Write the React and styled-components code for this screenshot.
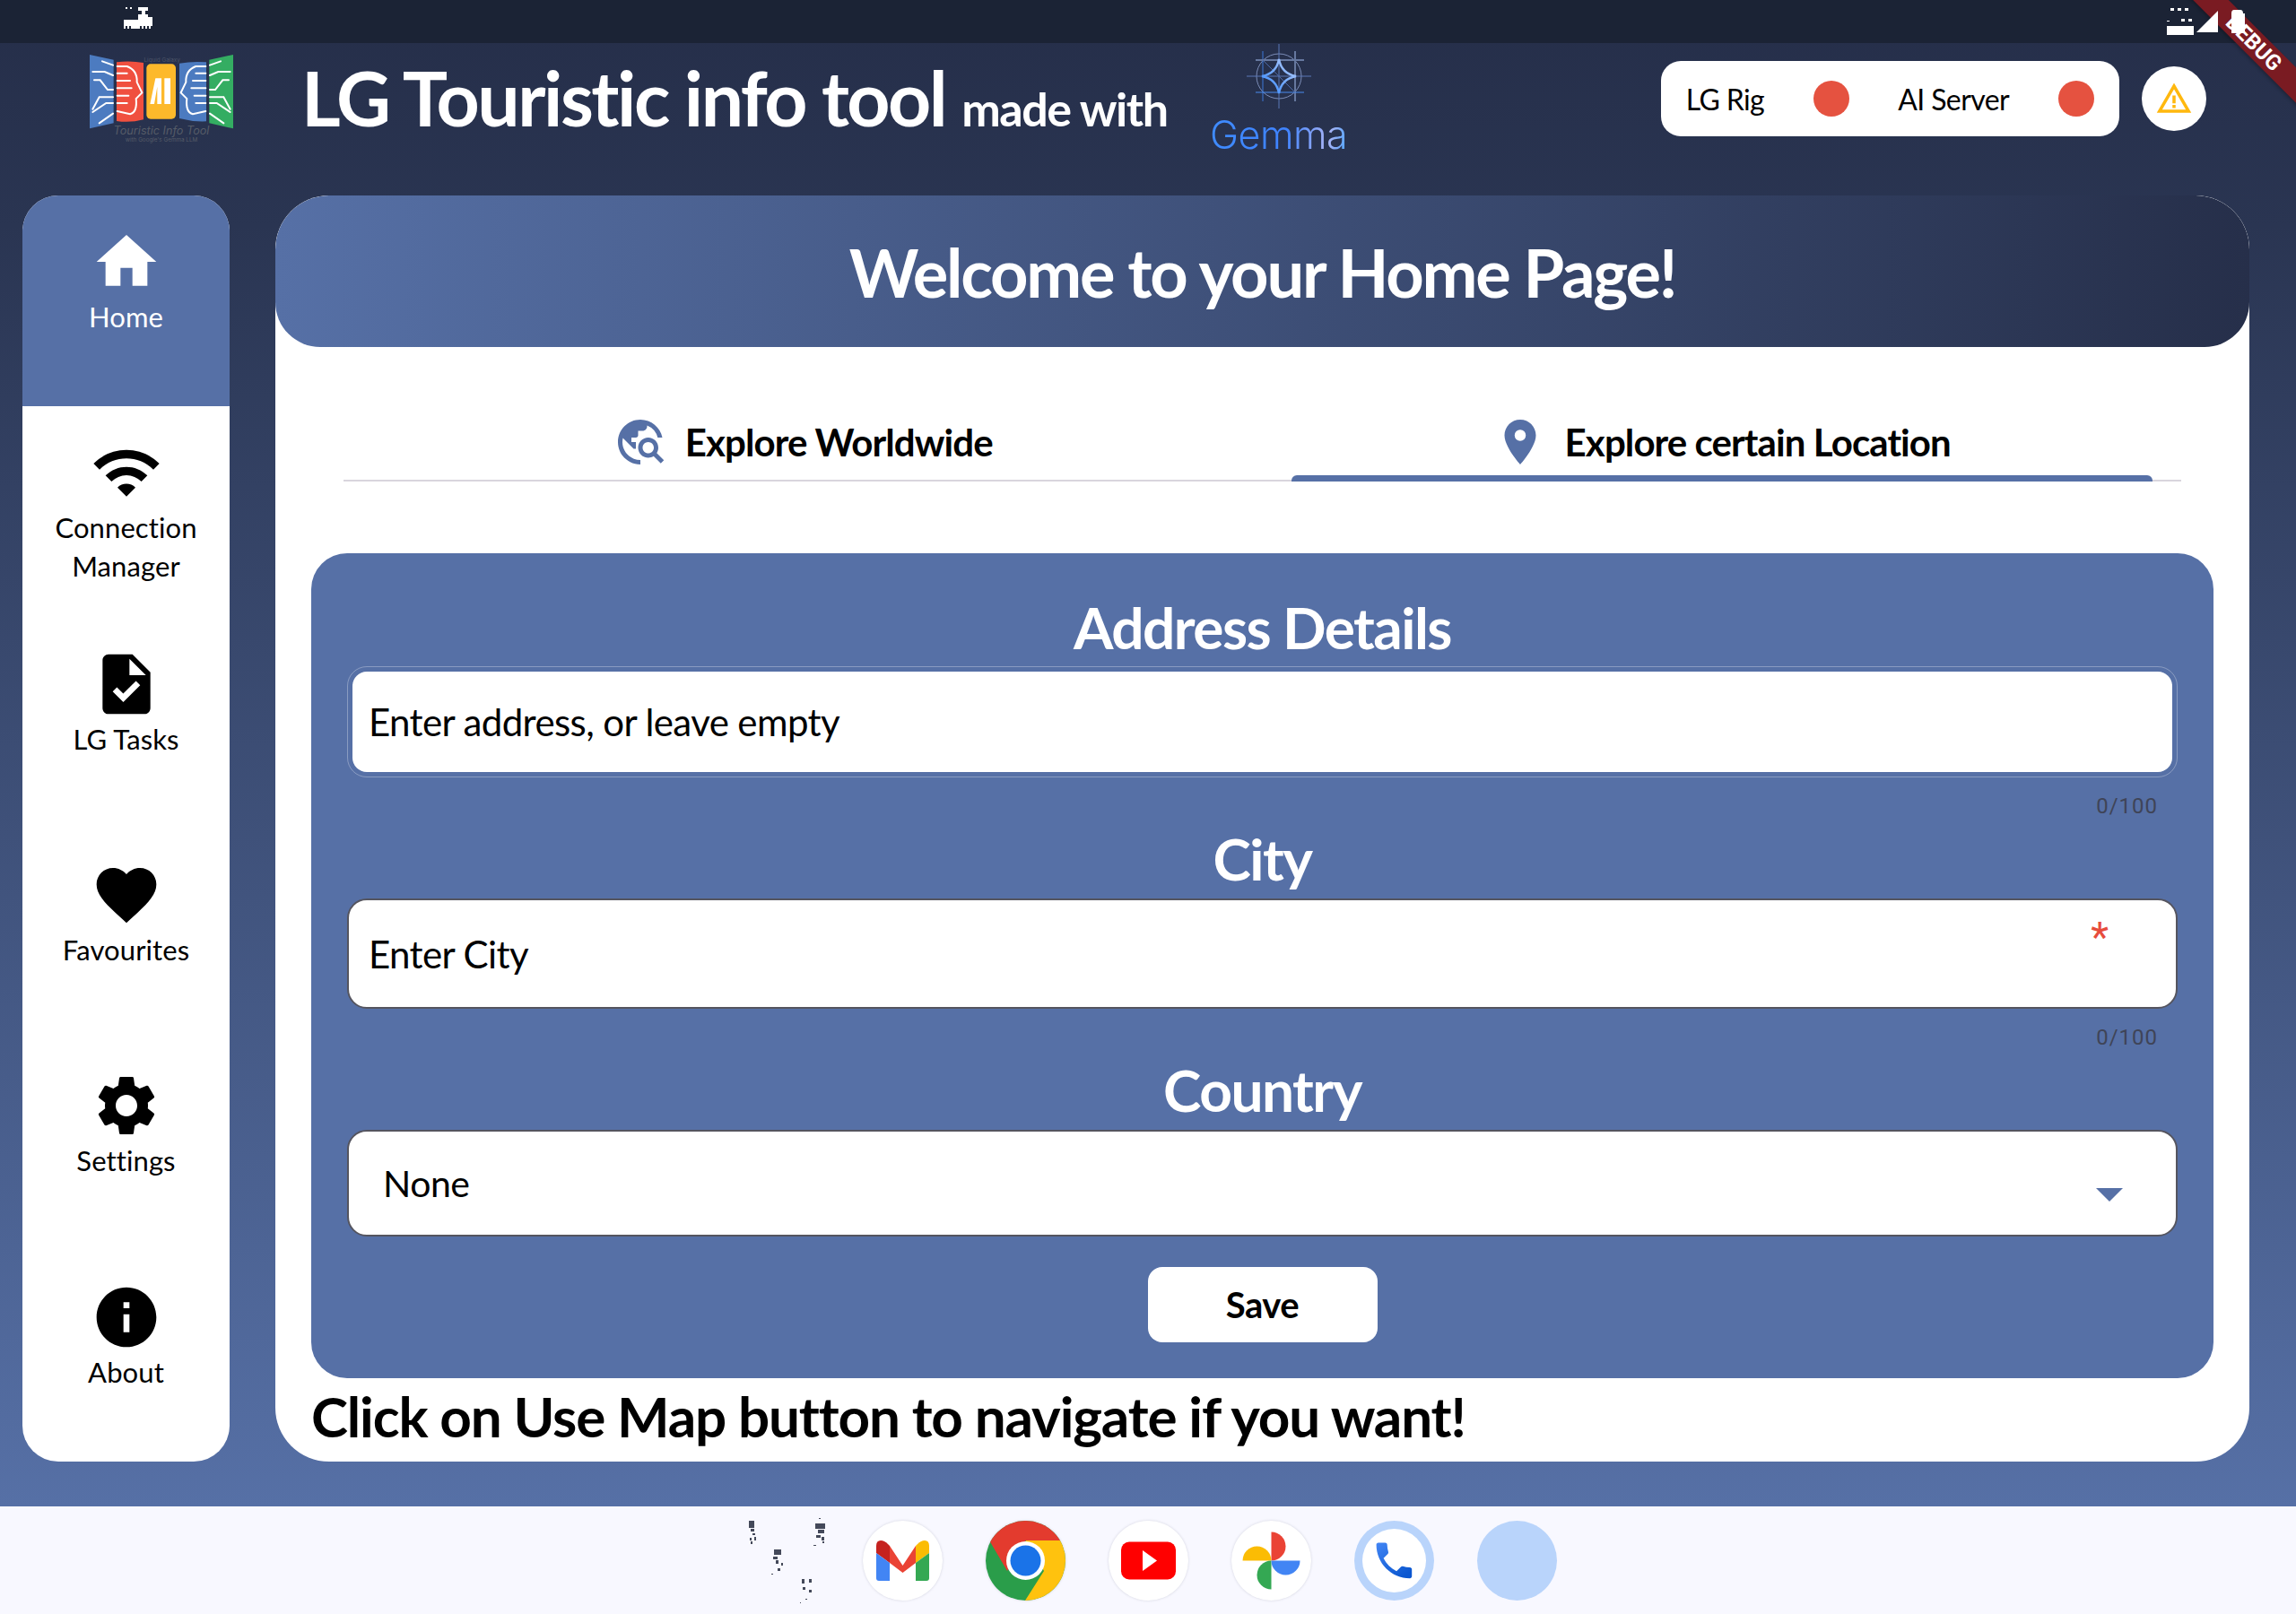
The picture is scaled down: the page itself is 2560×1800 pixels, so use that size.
import React from "react";
import styled, { createGlobalStyle } from "styled-components";
import { MdHome, MdWifi, MdTask, MdFavorite, MdSettings, MdInfo, MdWarningAmber, MdLocationOn, MdTravelExplore } from "react-icons/md";

const Global = createGlobalStyle`
  html, body { margin: 0; padding: 0; background: #f8f8ff; }
  * { box-sizing: border-box; }
  #root { width: 2560px; height: 1800px; overflow: hidden; }
`;

const Page = styled.div`
  position: relative;
  width: 2560px;
  height: 1800px;
  display: flex;
  flex-direction: column;
  font-family: Lato, "Liberation Sans", sans-serif;
  color: #000;
  overflow: hidden;
`;
const Backdrop = styled.div`
  flex: 1;
  display: flex;
  flex-direction: column;
  background: linear-gradient(180deg, #252e49 0%, #2a3552 15%, #5670a6 100%);
`;
const StatusBar = styled.div`
  height: 48px;
  background: #1b2335;
  display: flex;
  justify-content: space-between;
  align-items: flex-start;
  padding: 8px 57px 0 138px;
`;
const StatusGlyphs = styled.svg`
  display: block;
  position: relative;
  z-index: 3;
`;
const BannerClip = styled.div`
  position: absolute;
  top: 0;
  right: 0;
  width: 160px;
  height: 160px;
  overflow: hidden;
  z-index: 2;
  pointer-events: none;
`;
const Banner = styled.div`
  position: absolute;
  left: 0;
  top: 41px;
  width: 240px;
  height: 28px;
  padding-right: 20px;
  transform: rotate(45deg);
  background: #7a1b22;
  color: #fff;
  font: 700 24px/28px Roboto, sans-serif;
  text-align: center;
  box-shadow: 0 2px 4px rgba(0, 0, 0, 0.25);
`;
const AppBar = styled.header`
  height: 170px;
  display: flex;
  align-items: flex-start;
  padding: 0 100px 0 90px;
`;
const Logo = styled.svg`
  display: block;
  margin-top: 2px;
  flex: none;
`;
const TitleGroup = styled.div`
  display: flex;
  align-items: baseline;
  margin: 11px 0 0 66px;
  color: #fff;
`;
const AppTitle = styled.h1`
  margin: 0;
  font-size: 84px;
  line-height: 100px;
  font-weight: 700;
  letter-spacing: -2.5px;
`;
const AppSub = styled.span`
  margin-left: 18px;
  font-size: 52px;
  font-weight: 700;
  letter-spacing: -1.45px;
`;
const GemmaMark = styled.div`
  margin-left: 47px;
  width: 154px;
  display: flex;
  flex-direction: column;
  align-items: center;
`;
const GemmaWord = styled.span`
  margin-top: 3px;
  font: 300 43px/50px Inter, sans-serif;
  letter-spacing: -0.5px;
  background: linear-gradient(100deg, #3f8cff 0%, #3f83ff 55%, #a9b4f5 85%, #4aa3ff 100%);
  -webkit-background-clip: text;
  background-clip: text;
  color: transparent;
`;
const StatusCluster = styled.div`
  margin: 20px 0 0 auto;
  display: flex;
  align-items: center;
  gap: 25px;
`;
const StatusPill = styled.div`
  height: 84px;
  display: flex;
  align-items: center;
  gap: 54px;
  padding: 0 28px;
  background: #fff;
  border-radius: 22px;
`;
const StatusItem = styled.div`
  display: flex;
  align-items: center;
  gap: 55px;
  font-size: 32px;
  letter-spacing: -0.6px;
`;
const StatusDot = styled.span`
  width: 40px;
  height: 40px;
  border-radius: 50%;
  background: #e55240;
`;
const WarnButton = styled.div`
  width: 72px;
  height: 72px;
  border-radius: 50%;
  background: #fff;
  display: flex;
  align-items: center;
  justify-content: center;
  color: #ffb80e;
  font-size: 42px;
`;
const Body = styled.main`
  flex: 1;
  display: flex;
  gap: 51px;
  padding: 0 52px 50px 25px;
  min-height: 0;
`;
const Rail = styled.nav`
  width: 231px;
  display: flex;
  flex-direction: column;
  background: #fff;
  border-radius: 40px;
  overflow: hidden;
`;
const RailItem = styled.div`
  flex: 1;
  padding-top: 34px;
  display: flex;
  flex-direction: column;
  align-items: center;
  text-align: center;
  background: ${(p) => (p.$active ? "#5670a6" : "transparent")};
  color: ${(p) => (p.$active ? "#fff" : "#000")};
  font-size: 31px;
  line-height: 43px;
  letter-spacing: 0.1px;
  svg {
    display: block;
    width: 80px;
    height: 80px;
    flex: none;
  }
`;
const Panel = styled.section`
  flex: 1;
  display: flex;
  flex-direction: column;
  background: #fff;
  border-radius: 60px;
  overflow: hidden;
`;
const PanelHeader = styled.div`
  height: 169px;
  flex: none;
  padding-top: 2px;
  display: flex;
  align-items: center;
  justify-content: center;
  background: linear-gradient(90deg, #5670a6 0%, #262f4a 100%);
  border-radius: 60px 60px 50px 50px;
`;
const PanelTitle = styled.h2`
  margin: 0;
  color: #fff;
  font-size: 74px;
  font-weight: 700;
  letter-spacing: -2.2px;
`;
const Tabs = styled.div`
  margin: 63px 76px 0;
  height: 87px;
  flex: none;
  display: grid;
  grid-template-columns: 1fr 1fr;
  border-bottom: 2px solid #d9d5dd;
`;
const Tab = styled.div`
  position: relative;
  display: flex;
  align-items: center;
  justify-content: center;
  gap: 20px;
  font-size: 42px;
  font-weight: 700;
  letter-spacing: -0.9px;
  svg {
    width: 60px;
    height: 60px;
    color: #5670a6;
    flex: none;
  }
  ${(p) =>
    p.$active &&
    `&::after {
      content: "";
      position: absolute;
      left: 32px;
      right: 32px;
      bottom: -2px;
      height: 7px;
      background: #5670a6;
      border-radius: 6px 6px 0 0;
    }`}
`;
const FormCard = styled.div`
  margin: 80px 40px 0;
  height: 920px;
  flex: none;
  padding: 50px 40px 0;
  background: #5670a6;
  border-radius: 40px;
  display: flex;
  flex-direction: column;
`;
const FieldTitle = styled.h3`
  margin: ${(p) => (p.$first ? "0 0 6px" : "11px 0 7px")};
  height: 70px;
  color: #fff;
  text-align: center;
  font-size: 64px;
  line-height: 66px;
  font-weight: 700;
  letter-spacing: -1.55px;
`;
const FocusFrame = styled.div`
  height: 124px;
  padding: 5px;
  border: 1px solid rgba(255, 255, 255, 0.3);
  border-radius: 22px;
`;
const FieldBox = styled.div`
  position: relative;
  height: ${(p) => p.$h}px;
  background: #fff;
  border: 2px solid #55555f;
  border-radius: 22px;
  display: flex;
  align-items: center;
`;
const PlainBox = styled.div`
  height: 100%;
  background: #fff;
  border-radius: 16px;
  display: flex;
  align-items: center;
`;
const TextInput = styled.input`
  width: 100%;
  border: 0;
  outline: 0;
  background: transparent;
  padding: 0 0 0 ${(p) => p.$pad}px;
  font: 400 42px Lato, sans-serif;
  letter-spacing: -0.6px;
  &::placeholder {
    color: #000;
    opacity: 1;
  }
`;
const Required = styled.span`
  position: absolute;
  right: 75px;
  top: 19px;
  color: #e74c3c;
  font: 400 46px/44px Roboto, sans-serif;
`;
const Counter = styled.div`
  margin-top: 17px;
  height: 30px;
  padding-right: 22px;
  text-align: right;
  color: #3f4457;
  font: 400 24px/30px Roboto, sans-serif;
  letter-spacing: 1px;
`;
const SelectBox = styled(FieldBox)`
  justify-content: space-between;
  padding: 0 59px 0 38px;
  font-size: 41px;
  letter-spacing: -0.5px;
`;
const SelectArrow = styled.span`
  width: 0;
  height: 0;
  margin-top: 26px;
  border-left: 15px solid transparent;
  border-right: 15px solid transparent;
  border-top: 15px solid #5670a6;
`;
const SaveButton = styled.button`
  width: 256px;
  height: 84px;
  margin: 34px auto 0;
  border: 0;
  border-radius: 16px;
  background: #fff;
  font: 700 40px Lato, sans-serif;
  letter-spacing: -0.5px;
  color: #000;
`;
const Hint = styled.p`
  margin: 0;
  padding-left: 40px;
  font-size: 62px;
  line-height: 84px;
  font-weight: 700;
  letter-spacing: -1.15px;
  white-space: nowrap;
`;
const Dock = styled.footer`
  height: 120px;
  flex: none;
  background: #f8f8ff;
  display: flex;
  align-items: center;
  justify-content: center;
  gap: 48px;
`;
const DockTile = styled.div`
  width: 89px;
  height: 89px;
  flex: none;
  border-radius: 50%;
  background: ${(p) => p.$bg || "transparent"};
  box-shadow: ${(p) => (p.$flat ? "none" : "0 0 3px rgba(60, 64, 90, 0.2)")};
  svg {
    display: block;
  }
`;

const noise = [
  [834,1695,6,8],[836,1704,4,3],[838,1709,3,2],[835,1714,2,3],[840,1713,2,4],[836,1718,2,3],
  [908,1698,11,6],[911,1705,7,4],[909,1711,5,3],[915,1713,3,4],[906,1722,3,1],[912,1692,2,1],[916,1718,2,2],
  [862,1727,8,6],[861,1735,5,3],[864,1739,3,4],[870,1742,2,3],[866,1748,3,3],[859,1754,2,1],
  [901,1760,3,4],[893,1760,3,5],[894,1769,3,3],[901,1772,3,3],[897,1782,2,1],[891,1786,1,1]
];

function StarMark() {
  return (
    <svg width="96" height="74" viewBox="0 0 96 74" fill="none">
      <defs>
        <linearGradient id="g1" x1="0" y1="1" x2="1" y2="0">
          <stop offset="0" stopColor="#2f86ff" />
          <stop offset="1" stopColor="#bcd0fa" />
        </linearGradient>
      </defs>
      <circle cx="48" cy="37" r="25" stroke="#7c8db8" strokeWidth="1" />
      <path d="M48 1V73M12 37H84" stroke="#5b78b8" strokeWidth="1" />
      <path d="M30 9V65" stroke="#3d78d8" strokeWidth="1" />
      <path d="M66 9V65" stroke="#66789f" strokeWidth="2" />
      <path d="M22 19H76" stroke="#66789f" strokeWidth="2" />
      <path d="M22 55H76" stroke="#4a8cf0" strokeWidth="1" />
      <path d="M30 19L66 55" stroke="#4d6aa8" strokeWidth="1" />
      <path d="M48 18C50 29 56 35 67 37C56 39 50 45 48 56C46 45 40 39 29 37C40 35 46 29 48 18Z" stroke="url(#g1)" strokeWidth="2.4" />
    </svg>
  );
}

function AppLogo() {
  return (
    <Logo width="180" height="120" viewBox="0 0 540 360" fill="none">
      <path d="M30 33L110 50V262L30 280Z" fill="#4c7bc0" />
      <path d="M120 58Q165 52 210 60V250Q165 262 120 255Z" fill="#f0503f" />
      <rect x="220" y="64" width="98" height="184" rx="14" fill="#fdb92b" />
      <path d="M330 62Q375 54 420 58V256Q375 258 330 246Z" fill="#4c7bc0" />
      <path d="M430 50L510 33V280L430 262Z" fill="#34ad62" />
      <g stroke="#fff" strokeWidth="6" strokeLinecap="round">
        <path d="M72 55L108 68M40 90H80L108 102M45 118H65L90 150H108M40 215L62 175H108M40 225L85 195H108M62 262L108 230" />
        <path d="M468 55L432 68M500 90H460L432 102M495 118H475L450 150H432M500 215L478 175H432M500 225L455 195H432M478 262L432 230" />
        <path d="M122 72H155Q190 85 188 125L205 160L185 180Q190 225 165 232L122 222" />
        <path d="M418 72H385Q350 85 352 125L335 160L355 180Q350 225 375 232L418 222" />
        <path d="M122 95H155M122 120H165M122 145H170M122 170H160M122 195H155" />
        <path d="M418 95H385M418 120H375M418 145H370M418 170H380M418 195H385" />
      </g>
      <path d="M232 198L250 112H270L270 198H256L256 140L246 198ZM280 112H300V198H280Z" fill="#fff" />
      <text x="272" y="56" textAnchor="middle" fontFamily="Inter, sans-serif" fontSize="19" fill="#4c5468">Liquid Galaxy</text>
      <text x="270" y="300" textAnchor="middle" fontFamily="Inter, sans-serif" fontStyle="italic" fontSize="38" fill="#565c68">Touristic Info Tool</text>
      <text x="270" y="324" textAnchor="middle" fontFamily="Inter, sans-serif" fontSize="19" fill="#565c68">with Google's Gemma LLM</text>
    </Logo>
  );
}

function Gmail() {
  return (
    <svg width="89" height="89" viewBox="0 0 89 89">
      <path d="M15 28Q15 22 20 22Q24 22 28 26L30 28V47L15 36Z" fill="#c5221f" />
      <path d="M15 36L30 47V67H18Q15 67 15 64Z" fill="#4285f4" />
      <path d="M74 28Q74 22 69 22Q65 22 61 26L59 28V47L74 36Z" fill="#fbbc04" />
      <path d="M74 36L59 47V67H71Q74 67 74 64Z" fill="#34a853" />
      <path d="M30 28L44.5 50L59 28V47L44.5 58L30 47Z" fill="#ea4335" />
    </svg>
  );
}
function Chrome() {
  return (
    <svg width="89" height="89" viewBox="0 0 89 89">
      <defs>
        <clipPath id="chromeClip"><circle cx="44.5" cy="44.5" r="44.5" /></clipPath>
      </defs>
      <g clipPath="url(#chromeClip)">
        <rect width="89" height="89" fill="#2a9d4a" />
        <path d="M89 22V0H0V15L24 56L44.5 22Z" fill="#e33b2e" />
        <path d="M44.5 22H89V89H44L65 56Z" fill="#ffc20e" />
      </g>
      <circle cx="44.5" cy="44.5" r="21.5" fill="#fff" />
      <circle cx="44.5" cy="44.5" r="17" fill="#1a73e8" />
    </svg>
  );
}
function YouTube() {
  return (
    <svg width="89" height="89" viewBox="0 0 89 89">
      <rect x="14" y="23.5" width="61" height="42" rx="9" fill="#f00" />
      <path d="M38 33L54 44.5L38 56Z" fill="#fff" />
    </svg>
  );
}
function Photos() {
  return (
    <svg width="89" height="89" viewBox="0 0 89 89">
      <path d="M44.5 12.5A16 16 0 0 1 44.5 44.5Z" fill="#ea4335" />
      <path d="M12.5 44.5A16 16 0 0 1 44.5 44.5Z" fill="#fbbc04" />
      <path d="M44.5 76.5A16 16 0 0 1 44.5 44.5Z" fill="#34a853" />
      <path d="M76.5 44.5A16 16 0 0 1 44.5 44.5Z" fill="#4285f4" />
    </svg>
  );
}
function Phone() {
  return (
    <svg width="89" height="89" viewBox="0 0 89 89">
      <defs>
        <linearGradient id="phoneFill" x1="0" y1="0" x2="0.7" y2="1">
          <stop offset="0" stopColor="#4285f4" />
          <stop offset="1" stopColor="#0b57d0" />
        </linearGradient>
      </defs>
      <circle cx="44.5" cy="44.5" r="35.5" fill="#fff" />
      <g transform="translate(18 18) scale(2.2)">
        <path d="M6.62 10.79c1.44 2.83 3.76 5.14 6.59 6.59l2.2-2.2c.27-.27.67-.36 1.02-.24 1.12.37 2.33.57 3.57.57.55 0 1 .45 1 1V20c0 .55-.45 1-1 1-9.39 0-17-7.61-17-17 0-.55.45-1 1-1h3.5c.55 0 1 .45 1 1 0 1.25.2 2.45.57 3.57.11.35.03.74-.25 1.02l-2.2 2.2z" fill="url(#phoneFill)" />
      </g>
    </svg>
  );
}

const railItems = [
  { icon: MdHome, label: "Home", active: true },
  { icon: MdWifi, label: "Connection Manager" },
  { icon: MdTask, label: "LG Tasks" },
  { icon: MdFavorite, label: "Favourites" },
  { icon: MdSettings, label: "Settings" },
  { icon: MdInfo, label: "About" },
];

export default function App() {
  return (
    <Page>
      <Global />
      <Backdrop>
        <StatusBar>
          <StatusGlyphs width="32" height="24" viewBox="0 0 32 24" fill="#fff">
            <path d="M2 0h2v2H2zM7 0h2v2H7zM16 0h11v4H16zM20 4h4v4h-4zM16 8h11v3H16zM0 14h32v7h-2v3h-2v-3h-2v3h-2v-3h-2v3h-2v-3h-2v3H8v-3H6v3H4v-3H2v3H0zM16 11h16v3H16z" />
          </StatusGlyphs>
          <StatusGlyphs width="87" height="32" viewBox="0 0 87 32" fill="#fff">
            <path d="M4 1h4v3H4zM12 1h4v3h-4zM20 1h4v3h-4zM0 15h3v1H0zM16 13h4v3h-4zM24 13h4v3h-4zM0 21h30v10H0z" />
            <path d="M33 28L57 4V28Z" />
            <path d="M72 7Q72 3 75 3H82Q85 3 85 7H87V29H72Z" />
          </StatusGlyphs>
        </StatusBar>
        <AppBar>
          <AppLogo />
          <TitleGroup>
            <AppTitle>LG Touristic info tool</AppTitle>
            <AppSub>made with</AppSub>
          </TitleGroup>
          <GemmaMark>
            <StarMark />
            <GemmaWord>Gemma</GemmaWord>
          </GemmaMark>
          <StatusCluster>
            <StatusPill>
              <StatusItem>LG Rig<StatusDot /></StatusItem>
              <StatusItem>AI Server<StatusDot /></StatusItem>
            </StatusPill>
            <WarnButton><MdWarningAmber /></WarnButton>
          </StatusCluster>
        </AppBar>
        <Body>
          <Rail>
            {railItems.map(({ icon: Icon, label, active }) => (
              <RailItem key={label} $active={active}>
                <Icon />
                {label}
              </RailItem>
            ))}
          </Rail>
          <Panel>
            <PanelHeader>
              <PanelTitle>Welcome to your Home Page!</PanelTitle>
            </PanelHeader>
            <Tabs>
              <Tab><MdTravelExplore />Explore Worldwide</Tab>
              <Tab $active><MdLocationOn />Explore certain Location</Tab>
            </Tabs>
            <FormCard>
              <FieldTitle $first>Address Details</FieldTitle>
              <FocusFrame>
                <PlainBox>
                  <TextInput $pad={18} readOnly placeholder="Enter address, or leave empty" />
                </PlainBox>
              </FocusFrame>
              <Counter>0/100</Counter>
              <FieldTitle>City</FieldTitle>
              <FieldBox $h={123}>
                <TextInput $pad={22} readOnly placeholder="Enter City" />
                <Required>*</Required>
              </FieldBox>
              <Counter>0/100</Counter>
              <FieldTitle>Country</FieldTitle>
              <SelectBox $h={119}>
                None
                <SelectArrow />
              </SelectBox>
              <SaveButton>Save</SaveButton>
            </FormCard>
            <Hint>Click on Use Map button to navigate if you want!</Hint>
          </Panel>
        </Body>
      </Backdrop>
      <Dock>
        <DockTile $flat>
          <svg width="89" height="89" viewBox="824 1695 89 89" style={{ overflow: "visible" }} fill="#44495a">
            {noise.map(([x, y, w, h], i) => <rect key={i} x={x} y={y} width={w} height={h} />)}
          </svg>
        </DockTile>
        <DockTile $bg="#fff"><Gmail /></DockTile>
        <DockTile><Chrome /></DockTile>
        <DockTile $bg="#fff"><YouTube /></DockTile>
        <DockTile $bg="#fff"><Photos /></DockTile>
        <DockTile $bg="#b9d4fb" $flat><Phone /></DockTile>
        <DockTile $bg="#b9d4fb" $flat />
      </Dock>
      <BannerClip><Banner>DEBUG</Banner></BannerClip>
    </Page>
  );
}
